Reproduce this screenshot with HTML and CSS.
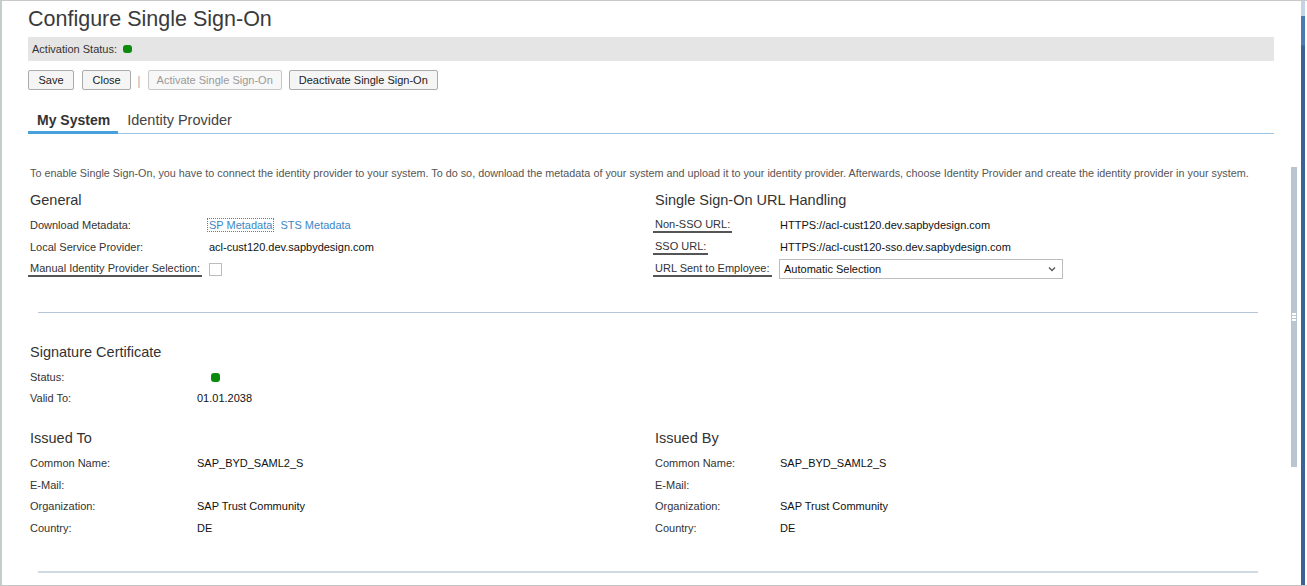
FILE: index.html
```html
<!DOCTYPE html>
<html>
<head>
<meta charset="utf-8">
<link rel="stylesheet" href="styles.css">
</head>
<body>
<div class="window">
  <div class="main">
    <h1 class="title">Configure Single Sign-On</h1>
    <div class="statusbar">
      <span>Activation Status:</span>
      <span class="dot"></span>
    </div>
    <div class="toolbar">
      <button class="btn">Save</button>
      <button class="btn">Close</button>
      <span class="sep">|</span>
      <button class="btn disabled">Activate Single Sign-On</button>
      <button class="btn last">Deactivate Single Sign-On</button>
    </div>
    <div class="tabs">
      <div class="tab active">My System</div>
      <div class="tab">Identity Provider</div>
    </div>
    <p class="intro">To enable Single Sign-On, you have to connect the identity provider to your system. To do so, download the metadata of your system and upload it to your identity provider. Afterwards, choose Identity Provider and create the identity provider in your system.</p>

    <div class="cols general">
      <div class="col">
        <h2 class="heading">General</h2>
        <div class="row wide"><span class="label">Download Metadata:</span><span class="value"><a class="link focus">SP Metadata</a> <a class="link">STS Metadata</a></span></div>
        <div class="row wide"><span class="label">Local Service Provider:</span><span class="value">acl-cust120.dev.sapbydesign.com</span></div>
        <div class="row wide"><span class="label"><span class="ul">Manual Identity Provider Selection:</span></span><span class="value"><span class="checkbox"></span></span></div>
      </div>
      <div class="col">
        <h2 class="heading">Single Sign-On URL Handling</h2>
        <div class="row right"><span class="label"><span class="ul">Non-SSO URL:</span></span><span class="value">HTTPS://acl-cust120.dev.sapbydesign.com</span></div>
        <div class="row right"><span class="label"><span class="ul">SSO URL:</span></span><span class="value">HTTPS://acl-cust120-sso.dev.sapbydesign.com</span></div>
        <div class="row right"><span class="label"><span class="ul">URL Sent to Employee:</span></span><span class="value"><span class="select"><span>Automatic Selection</span><svg width="8" height="6" viewBox="0 0 8 6"><path d="M1 1.5 L4 4.5 L7 1.5" fill="none" stroke="#555" stroke-width="1.3"/></svg></span></span></div>
      </div>
    </div>

    <div class="divider"></div>

    <div class="cols cert">
      <div class="col">
        <h2 class="heading">Signature Certificate</h2>
        <div class="row compact"><span class="label">Status:</span><span class="value"><span class="dot small"></span></span></div>
        <div class="row compact"><span class="label">Valid To:</span><span class="value">01.01.2038</span></div>
      </div>
    </div>

    <div class="cols issued">
      <div class="col">
        <h2 class="heading">Issued To</h2>
        <div class="row compact"><span class="label">Common Name:</span><span class="value">SAP_BYD_SAML2_S</span></div>
        <div class="row compact"><span class="label">E-Mail:</span><span class="value"></span></div>
        <div class="row compact"><span class="label">Organization:</span><span class="value">SAP Trust Community</span></div>
        <div class="row compact"><span class="label">Country:</span><span class="value">DE</span></div>
      </div>
      <div class="col">
        <h2 class="heading">Issued By</h2>
        <div class="row right"><span class="label">Common Name:</span><span class="value">SAP_BYD_SAML2_S</span></div>
        <div class="row right"><span class="label">E-Mail:</span><span class="value"></span></div>
        <div class="row right"><span class="label">Organization:</span><span class="value">SAP Trust Community</span></div>
        <div class="row right"><span class="label">Country:</span><span class="value">DE</span></div>
      </div>
    </div>

    <div class="divider thick"></div>
  </div>
  <div class="rail">
    <div class="thumb">
      <span class="grip"></span><span class="grip"></span><span class="grip"></span>
    </div>
  </div>
  <div class="stripe"></div>
</div>
</body>
</html>
```

FILE: styles.css
```css
* { box-sizing: border-box; }
html, body { margin: 0; padding: 0; background: #fff; }
body {
  font-family: "Liberation Sans", Arial, sans-serif;
  font-size: 11px;
  color: #333;
}
.window {
  display: flex;
  width: 1307px;
  height: 586px;
  overflow: hidden;
  border-top: 1px solid #c9c9c9;
  border-bottom: 1px solid #c4c4c4;
  border-left: 2px solid #c4cccc;
}
.main {
  flex: 1;
  padding: 5px 16px 0 26px;
  overflow: hidden;
}
.title {
  margin: 0;
  font-size: 21.5px;
  font-weight: normal;
  line-height: 26px;
  color: #3a3a3a;
}
.statusbar {
  margin-top: 5px;
  height: 24px;
  background: #e5e5e5;
  display: flex;
  align-items: center;
  padding-left: 4px;
  gap: 6px;
  color: #333;
}
.dot {
  display: inline-block;
  width: 9px;
  height: 8px;
  border-radius: 3px;
  background: #0b8a0b;
}
.dot.small { width: 9px; height: 9px; margin-left: 14px; margin-top: 1px; }
.toolbar {
  margin-top: 9px;
  display: flex;
  align-items: center;
  gap: 8px;
}
.btn {
  font-family: inherit;
  font-size: 11px;
  height: 20px;
  padding: 0 9.5px;
  background: #f5f5f5;
  border: 1px solid #ababab;
  border-radius: 2px;
  color: #222;
}
.btn.disabled { color: #9a9a9a; border-color: #c8c8c8; background: #f7f7f7; padding: 0 8px; }
.sep { color: #b5b5b5; font-size: 13px; margin: 0 -1px 0 -2px; }
.btn.last { margin-left: -1px; padding: 0 9px; }
.tabs {
  margin-top: 18px;
  display: flex;
  border-bottom: 1px solid #9cc6e6;
}
.tab {
  padding: 4px 8px 2px 9px;
  line-height: 17px;
  font-size: 14.5px;
  color: #444;
  margin-bottom: -1px;
  border-bottom: 3px solid transparent;
}
.tab.active {
  font-weight: bold;
  font-size: 14px;
  color: #333;
  border-bottom-color: #48a0dc;
}
.intro {
  margin: 32px 0 0 2px;
  line-height: 14px;
  font-size: 10.8px;
  color: #555;
  white-space: nowrap;
}
.cols {
  display: grid;
  grid-template-columns: 625px 1fr;
  padding-left: 2px;
}
.general { margin-top: 11px; }
.heading {
  margin: 0 0 5px 0;
  font-size: 14.5px;
  font-weight: normal;
  line-height: 18px;
  color: #333;
}
.row {
  display: flex;
  align-items: center;
  height: 22px;
}
.row.compact, .cert .row, .issued .row { height: 21.6px; }
.label { flex: none; color: #333; }
.row.wide .label { width: 179px; }
.row.compact .label { width: 167px; }
.row.right .label { width: 125px; }
.value { color: #111; display: flex; align-items: center; gap: 4px; }
.ul {
  display: inline-block;
  line-height: 13px;
  padding: 0 2px 0 2px;
  margin-left: -2px;
  border-bottom: 2px solid #555;
}
.link { color: #3a88c6; text-decoration: none; padding: 0 1px; border: 1px dotted transparent; }
.link.focus { border-color: #3a88c6; margin-left: -2px; }
.checkbox {
  display: inline-block;
  width: 13px;
  height: 13px;
  border: 1px solid #bcbcbc;
  background: #fff;
  margin-top: 1px;
}
.select {
  margin-left: -1px;
  width: 284px;
  height: 20px;
  border: 1px solid #bdbdbd;
  display: flex;
  align-items: center;
  justify-content: space-between;
  padding: 0 6px 0 4px;
  color: #111;
}
.divider {
  margin: 32px 16px 0 10px;
  height: 1px;
  background: #b4c6d6;
}
.cert { margin-top: 30px; }
.issued { margin-top: 20px; }
.divider.thick {
  margin-top: 32px;
  height: 2px;
  background: #d0dae4;
}
.rail {
  flex: none;
  width: 11px;
  padding: 166px 4px 0 1px;
}
.thumb {
  height: 300px;
  background: #b9c5d1;
  display: flex;
  flex-direction: column;
  justify-content: center;
  align-items: center;
  gap: 1px;
}
.grip { width: 4px; height: 2px; background: #fff; }
.stripe {
  flex: none;
  width: 4px;
  margin-right: 2px;
  margin-top: -1px;
  margin-bottom: -1px;
  background: linear-gradient(#c4d3e4 0, #c4d3e4 16px, #4d7bb1 16px, #4d7bb1 45px, #3b6393 46px);
}
```
